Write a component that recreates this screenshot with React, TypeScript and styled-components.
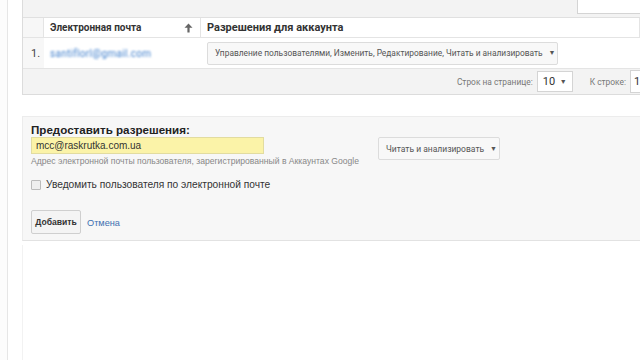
import React from 'react'
import styled, { createGlobalStyle } from 'styled-components'

const GlobalStyle = createGlobalStyle`
  html, body {
    margin: 0;
    padding: 0;
    background: #fff;
    font-family: Roboto, 'Liberation Sans', Arial, sans-serif;
    overflow: hidden;
  }
`

const Page = styled.div`
  display: flex;
  width: 640px;
  height: 360px;
  background: #fff;
`

const Rail = styled.div`
  position: relative;
  width: 7px;
  flex: none;
  background: #fcfcfc;
  border-right: 1px solid #e6e6e6;

  ::after {
    position: absolute;
    content: '';
    top: 84px;
    right: -5px;
    width: 8px;
    height: 8px;
    background: #fcfcfc;
    border-top: 1px solid #ececec;
    border-right: 1px solid #ececec;
    transform: rotate(45deg);
  }
`

const Main = styled.div`
  flex: 1;
  display: flex;
  flex-direction: column;
  margin-left: 14px;
  min-width: 0;
`

const TablePanel = styled.div`
  background: #f3f3f3;
  border-left: 1px solid #dcdcdc;
  border-bottom: 1px solid #dcdcdc;
  display: flex;
  flex-direction: column;
`

const Toolbar = styled.div`
  height: 17px;
  display: flex;
  justify-content: flex-end;
  align-items: flex-start;
  border-bottom: 1px solid #e0e0e0;
`

const SearchBox = styled.div`
  width: 62px;
  height: 13px;
  background: #fff;
  border: 1px solid #d4d4d4;
  border-top: none;
  border-right: none;
`

const Grid = styled.div`
  display: grid;
  grid-template-columns: 21px 157px 1fr;
`

const HeadCell = styled.div<{ $first?: boolean; $size?: number }>`
  height: 20px;
  display: flex;
  align-items: center;
  justify-content: space-between;
  padding: 0 ${(p) => (p.$first ? 0 : 6)}px;
  background: ${(p) => (p.$first ? '#f7f7f7' : '#fff')};
  border-right: 1px solid #e4e4e4;
  border-bottom: 1px solid #e4e4e4;
  font-size: ${(p) => p.$size ?? 11}px;
  font-weight: 700;
  color: #333;
  box-sizing: border-box;
`

const SortIcon = styled.svg`
  width: 9px;
  height: 10px;
  margin-right: 1px;
`

const BodyCell = styled.div<{ $first?: boolean }>`
  height: 30px;
  display: flex;
  align-items: center;
  padding: 0 ${(p) => (p.$first ? 8 : 6)}px;
  background: ${(p) => (p.$first ? '#f7f7f7' : '#fff')};
  font-size: 11px;
  color: #444;
  box-sizing: border-box;
`

const BlurredEmail = styled.span`
  color: #3f7fcc;
  font-size: 10px;
  letter-spacing: 0.3px;
  filter: blur(1.1px);
`

const Select = styled.div<{ $w?: number }>`
  display: flex;
  align-items: center;
  justify-content: space-between;
  gap: 6px;
  height: 23px;
  padding: 0 6px 0 7px;
  width: ${(p) => (p.$w ? `${p.$w}px` : 'auto')};
  background: #f8f8f8;
  border: 1px solid #dcdcdc;
  border-radius: 2px;
  font-size: 8.4px;
  color: #555;
  box-sizing: border-box;
  white-space: nowrap;
`

const Caret = styled.span`
  font-size: 7px;
  color: #555;
`

const Footer = styled.div`
  height: 25px;
  display: flex;
  align-items: center;
  justify-content: flex-end;
  gap: 4px;
  font-size: 8.4px;
  color: #777;
  border-top: 1px solid #e4e4e4;
`

const PagerSelect = styled.div`
  display: flex;
  align-items: center;
  justify-content: space-between;
  width: 36px;
  height: 21px;
  padding: 0 5px;
  margin-right: 13px;
  background: #fff;
  border: 1px solid #d4d4d4;
  box-sizing: border-box;
  font-size: 11px;
  color: #333;
`

const GotoInput = styled.div`
  width: 6px;
  height: 21px;
  padding-left: 3px;
  background: #fff;
  border: 1px solid #d4d4d4;
  border-right: none;
  font-size: 11px;
  color: #333;
  display: flex;
  align-items: center;
  box-sizing: content-box;
`

const FormPanel = styled.div`
  margin-top: 21px;
  height: 125px;
  background: #f7f7f7;
  border-top: 1px solid #ececec;
  border-left: 1px solid #ececec;
  border-bottom: 1px solid #e2e2e2;
  padding: 5px 8px 0;
  box-sizing: border-box;
  font-family: 'Liberation Sans', Arial, sans-serif;
  display: flex;
  flex-direction: column;
`

const Title = styled.h2`
  margin: 0;
  font-size: 11.6px;
  font-weight: 700;
  color: #222;
  line-height: 15px;
`

const EmailRow = styled.div`
  display: flex;
  align-items: flex-start;
  gap: 19px;
`

const EmailField = styled.div`
  display: flex;
  flex-direction: column;
  gap: 2px;
`

const EmailInput = styled.div`
  width: 233px;
  height: 17px;
  padding: 0 4px;
  box-sizing: border-box;
  background: #fbf3a8;
  border: 1px solid #e2dca0;
  font-size: 10px;
  color: #333;
  display: flex;
  align-items: center;
`

const Hint = styled.div`
  font-size: 8.6px;
  line-height: 11px;
  color: #888;
  white-space: nowrap;
`

const RoleSelect = styled(Select)`
  height: 23px;
  font-family: Roboto, sans-serif;
  font-size: 8.5px;
`

const CheckRow = styled.label`
  display: flex;
  align-items: center;
  gap: 5px;
  margin-top: 11px;
  font-size: 10.2px;
  line-height: 13px;
  color: #333;
`

const Box = styled.span`
  width: 8px;
  height: 8px;
  border: 1px solid #bbb;
  background: #eee;
  border-radius: 1px;
`

const Actions = styled.div`
  display: flex;
  align-items: center;
  gap: 6px;
  margin-top: 19px;
`

const AddButton = styled.button`
  height: 24px;
  width: 50px;
  padding: 0;
  font-family: 'Liberation Sans', Arial, sans-serif;
  font-size: 8.6px;
  font-weight: 700;
  color: #333;
  background: #f4f4f4;
  border: 1px solid #cfcfcf;
  border-radius: 2px;
`

const CancelLink = styled.a`
  font-size: 9.2px;
  color: #3d6fb0;
  margin-top: 2px;
`

const Rest = styled.div`
  flex: 1;
  margin-top: 4px;
  border-left: 1px solid #f2f2f2;
`

const App: React.FC = () => {
  return (
    <>
      <GlobalStyle />
      <Page>
        <Rail />
        <Main>
          <TablePanel>
            <Toolbar>
              <SearchBox />
            </Toolbar>
            <Grid>
              <HeadCell $first />
              <HeadCell $size={10}>
                Электронная почта
                <SortIcon viewBox="0 0 9 10">
                  <path d="M4.5 0.5 L8.5 4.8 L5.6 4.8 L5.6 9.5 L3.4 9.5 L3.4 4.8 L0.5 4.8 Z" fill="#666" />
                </SortIcon>
              </HeadCell>
              <HeadCell>Разрешения для аккаунта</HeadCell>
              <BodyCell $first>1.</BodyCell>
              <BodyCell>
                <BlurredEmail>santiflorl@gmail.com</BlurredEmail>
              </BodyCell>
              <BodyCell>
                <Select $w={351}>
                  Управление пользователями, Изменить, Редактирование, Читать и анализировать
                  <Caret>▼</Caret>
                </Select>
              </BodyCell>
            </Grid>
            <Footer>
              Строк на странице:
              <PagerSelect>
                10 <Caret>▼</Caret>
              </PagerSelect>
              К строке:
              <GotoInput>1</GotoInput>
            </Footer>
          </TablePanel>
          <FormPanel>
            <Title>Предоставить разрешения:</Title>
            <EmailRow>
              <EmailField>
                <EmailInput>mcc@raskrutka.com.ua</EmailInput>
                <Hint>Адрес электронной почты пользователя, зарегистрированный в Аккаунтах Google</Hint>
              </EmailField>
              <RoleSelect $w={122}>
                Читать и анализировать <Caret>▼</Caret>
              </RoleSelect>
            </EmailRow>
            <CheckRow>
              <Box />
              Уведомить пользователя по электронной почте
            </CheckRow>
            <Actions>
              <AddButton>Добавить</AddButton>
              <CancelLink>Отмена</CancelLink>
            </Actions>
          </FormPanel>
          <Rest />
        </Main>
      </Page>
    </>
  )
}

export default App
